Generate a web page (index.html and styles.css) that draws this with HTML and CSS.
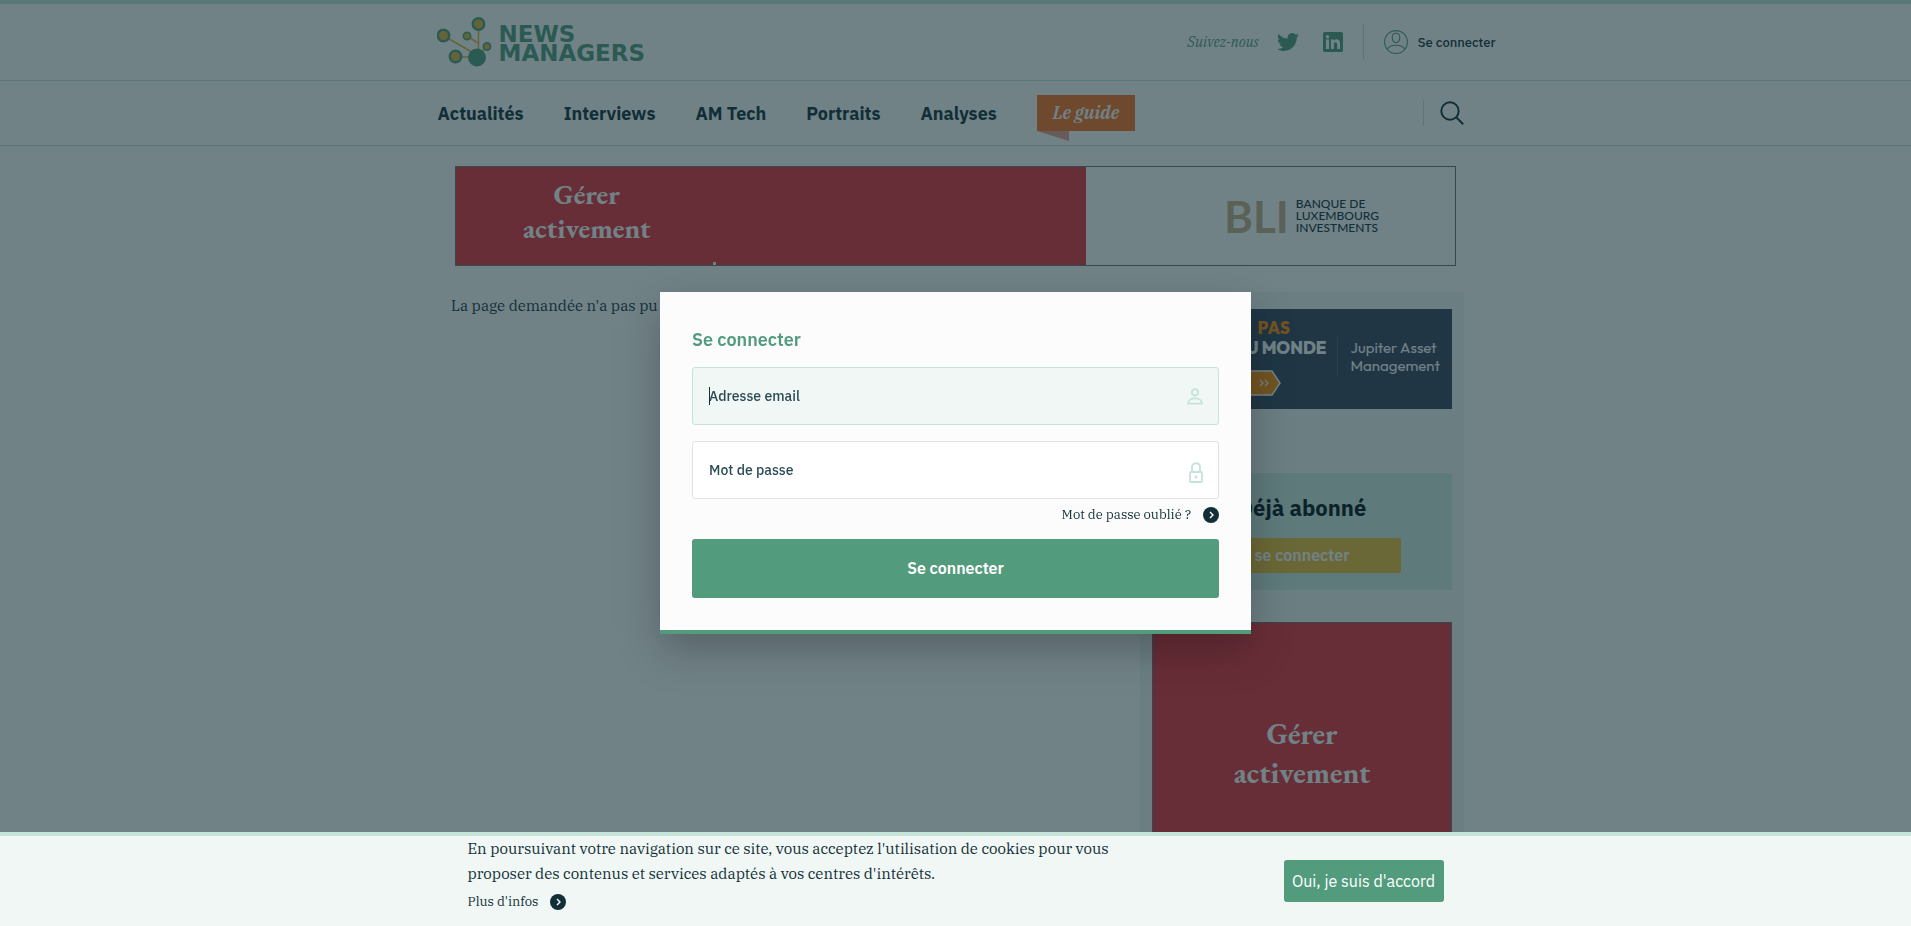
FILE: index.html
```html
<!DOCTYPE html>
<html lang="fr">
<head>
<meta charset="utf-8">
<title>News Managers</title>
<link rel="stylesheet" href="styles.css">
</head>
<body>
<header class="site-header">
  <div class="header-inner">
    <a class="logo" href="#">
      <svg width="56" height="52" viewBox="17 16 56 52" aria-hidden="true">
        <path d="M24 36 57 55M58.500 24V56M47 36l11 7M67 46 57 57M36 57h20" stroke="#e0b53c" stroke-width="1.500" fill="none"/>
        <g fill="#e0b53c" stroke="#529b7d" stroke-width="2.500">
          <circle cx="58.500" cy="24" r="5.700"/><circle cx="23.500" cy="35.500" r="5.700"/><circle cx="47" cy="36" r="3.600" stroke-width="1.700"/><circle cx="67" cy="46.500" r="3.600" stroke-width="1.700"/><circle cx="35.500" cy="56.500" r="5.700"/>
        </g>
        <circle cx="57" cy="57.500" r="9" fill="#529b7d"/>
      </svg>
      <span class="logo-text">NEWS<br>MANAGERS</span>
    </a>
    <div class="header-tools">
      <span class="follow">Suivez-nous</span>
      <a class="social" href="#" aria-label="Twitter"><svg width="22" height="22" viewBox="0 0 24 24" fill="#529b7d"><path d="M23.950 4.570a10 10 0 0 1-2.820.77 4.960 4.960 0 0 0 2.160-2.720c-.95.550-2 .950-3.130 1.180a4.920 4.920 0 0 0-8.380 4.480C7.690 8.090 4.070 6.130 1.640 3.160a4.820 4.820 0 0 0-.67 2.480c0 1.710.870 3.210 2.190 4.100a4.900 4.900 0 0 1-2.230-.62v.06a4.920 4.920 0 0 0 3.950 4.830 5 5 0 0 1-2.210.08 4.940 4.940 0 0 0 4.600 3.420A9.870 9.870 0 0 1 0 19.540a14 14 0 0 0 7.550 2.210c9.050 0 14-7.500 14-13.980 0-.21 0-.42-.02-.63a9.940 9.940 0 0 0 2.460-2.550z"/></svg></a>
      <a class="social" href="#" aria-label="LinkedIn"><svg width="20" height="20" viewBox="0 0 20 20"><path fill="#529b7d" fill-rule="evenodd" d="M1.500 0h17A1.500 1.500 0 0 1 20 1.500v17a1.500 1.500 0 0 1-1.500 1.500h-17A1.500 1.500 0 0 1 0 18.500v-17A1.500 1.500 0 0 1 1.500 0zM3 7.500V17h3V7.500zM4.500 3a1.700 1.700 0 1 0 0 3.400 1.700 1.700 0 0 0 0-3.400zM8 7.500V17h2.900v-4.700c0-2.900 3.300-2.900 3.300 0V17H17v-5.700c0-4.700-4.600-4.900-6.100-2.400V7.500z"/></svg></a>
      <a class="account" href="#"><svg width="24" height="24" viewBox="0 0 24 24" fill="none" stroke="#529b7d" stroke-width="1.100"><circle cx="12" cy="12" r="11.400"/><path d="M12 3.200c2.500 0 3.800 1.600 3.800 4.200S14.200 12.800 12 12.800 8.200 10 8.200 7.400 9.500 3.200 12 3.200zM3.200 19.200c1.500-2.600 5-3.900 8.800-3.900s7.300 1.300 8.800 3.900"/></svg>Se connecter</a>
    </div>
  </div>
</header>
<nav class="site-nav">
  <div class="nav-inner">
    <a href="#">Actualités</a><a href="#">Interviews</a><a href="#">AM Tech</a><a href="#">Portraits</a><a href="#">Analyses</a>
    <a class="guide" href="#">Le guide</a>
    <button class="search" type="button" aria-label="Rechercher"><svg width="24" height="24" viewBox="0 0 24 24" fill="none" stroke="#122f37" stroke-width="2"><circle cx="10" cy="10" r="8.700"/><path d="m16.200 16.200 7 7"/></svg></button>
  </div>
</nav>
<a class="banner" href="#">
  <span class="banner-red"><span class="slogan">Gérer<br>activement</span><span class="speck"></span></span>
  <span class="bli"><span class="bli-mark">BLI</span><span class="bli-name">BANQUE DE<br>LUXEMBOURG<br>INVESTMENTS</span></span>
</a>
<main class="content">
  <p class="message">La page demandée n'a pas pu</p>
  <aside class="sidebar">
    <a class="jupiter" href="#">
      <span class="jupiter-claim"><span class="pas">PAS</span><span class="monde">DU MONDE</span>
        <svg width="60" height="26" viewBox="0 0 60 26"><path d="M0 1h51l8 12-8 12H0z" fill="#ff8c05" stroke="#fff" stroke-width="1.500"/><path d="m39 10 3 3-3 3m5-6 3 3-3 3" fill="none" stroke="#fff" stroke-width="1.200"/></svg>
      </span>
      <span class="jupiter-name">Jupiter Asset<br>Management</span>
    </a>
    <section class="subscriber"><h2>Déjà abonné</h2><a href="#">se connecter</a></section>
    <a class="square-ad" href="#">Gérer<br>activement</a>
  </aside>
</main>

<div class="overlay">
  <form class="login" role="dialog" aria-labelledby="login-title">
    <h2 id="login-title">Se connecter</h2>
    <div class="field field-active">
      <input type="email" aria-label="Adresse email" placeholder="Adresse email">
      <span class="caret"></span>
      <svg class="field-icon" width="16" height="17" viewBox="0 0 16 17" fill="none" stroke="#c5e3d8" stroke-width="1.800"><circle cx="8" cy="4.300" r="3.200"/><path d="M1 15.700c0-7 14-7 14 0z"/></svg>
    </div>
    <div class="field">
      <input type="password" aria-label="Mot de passe" placeholder="Mot de passe">
      <svg class="field-icon" width="14" height="21" viewBox="0 0 14 21" fill="none" stroke="#c5e3d8" stroke-width="1.800"><rect x="1" y="10" width="12" height="10" rx="1"/><path d="M3 10V5c0-5 8-5 8 0v5"/><circle cx="7" cy="15" r=".7"/></svg>
    </div>
    <a class="more forgot" href="#">Mot de passe oublié ?<svg width="16" height="16" viewBox="0 0 16 16"><circle cx="8" cy="8" r="8" fill="#122f37"/><path d="m7 5 3 3-3 3" fill="none" stroke="#fff" stroke-width="1.400"/></svg></a>
    <button class="submit" type="submit">Se connecter</button>
  </form>
</div>

<div class="cookies">
  <div class="cookies-inner">
    <div class="cookies-text">
      <p>En poursuivant votre navigation sur ce site, vous acceptez l'utilisation de cookies pour vous<br>proposer des contenus et services adaptés à vos centres d'intérêts.</p>
      <a class="more" href="#">Plus d'infos<svg width="16" height="16" viewBox="0 0 16 16"><circle cx="8" cy="8" r="8" fill="#122f37"/><path d="m7 5 3 3-3 3" fill="none" stroke="#fff" stroke-width="1.400"/></svg></a>
    </div>
    <button class="accept" type="button">Oui, je suis d'accord</button>
  </div>
</div>
</body>
</html>
```

FILE: styles.css
```css
:root {
  --ink: #122f37;
  --green: #529b7d;
  --mint: #c5e3d8;
  --pale: #f0f7f5;
  --sans: "IBM Plex Sans", Roboto, "Noto Sans", sans-serif;
  --serif: "IBM Plex Serif", "DejaVu Serif Condensed", "DejaVu Serif", serif;
  --garamond: "EB Garamond", "Liberation Serif", serif;
  --geometric: Outfit, Lato, sans-serif;
}
* { box-sizing: border-box; }
body {
  margin: 0;
  height: 100vh;
  overflow: hidden;
  background: #fff;
  color: var(--ink);
  font-family: var(--sans);
}
a { color: inherit; text-decoration: none; }
button { border: 0; font-family: inherit; cursor: pointer; }
h2, p { margin: 0; }
svg { display: block; flex: none; }

.site-header { border-top: 4px solid var(--mint); border-bottom: 1px solid var(--mint); }
.header-inner, .nav-inner {
  display: flex;
  align-items: center;
  max-width: 1080px;
  margin: 0 auto;
}
.header-inner { height: 76px; padding-left: 21px; justify-content: space-between; }
.logo { display: flex; align-items: center; gap: 6px; }
.logo-text {
  padding-top: 3px;
  color: var(--green);
  font: bold 23px/19px "DejaVu Sans", sans-serif;
}
.header-tools { display: flex; align-items: center; }
.follow { color: var(--green); font: italic 14px/20px var(--serif); margin-right: 18px; }
.social { margin-right: 24px; }
.social + .social { margin-right: 20px; }
.account {
  display: flex;
  align-items: center;
  gap: 10px;
  height: 36px;
  padding-left: 20px;
  border-left: 1px solid var(--mint);
  font-size: 13px;
  font-weight: 500;
}

.site-nav { border-bottom: 1px solid var(--mint); }
.nav-inner { height: 64px; gap: 40px; padding: 0 32px 0 22px; font-size: 18px; font-weight: 700; }
.guide {
  position: relative;
  padding: 0 16px;
  background: #f87020;
  color: #fff;
  font: italic 600 18px/36px var(--serif);
}
.guide::after {
  content: "";
  position: absolute;
  top: 100%;
  left: 0;
  border-top: 10px solid #e8a090;
  border-left: 32px solid transparent;
}
.search {
  margin-left: auto;
  padding: 1px 0 1px 16px;
  border-left: 1px solid #ddd;
  background: none;
}

.banner {
  display: flex;
  max-width: 1001px;
  height: 100px;
  margin: 20px auto 26px;
  border: 1px solid #6c7073;
  overflow: hidden;
}
.banner-red {
  display: flex;
  justify-content: space-between;
  align-items: flex-end;
  width: 630px;
  padding-left: 67px;
  background: #e92d39;
  color: #fff;
}
.slogan { padding-bottom: 20px; text-align: center; font: bold 28px/34px var(--garamond); }
.speck { width: 3px; height: 3px; margin-right: 370px; background: #fff; }
.bli { display: flex; align-items: center; gap: 7px; margin-left: auto; padding-right: 76px; }
.bli-mark { color: #c6ac84; font: bold 44px/44px Lato, sans-serif; }
.bli-name { font: 500 12px/12px Lato, sans-serif; }

.content {
  display: flex;
  justify-content: space-between;
  max-width: 1017px;
  margin: 0 auto;
}
.message { padding: 4px; font: 15px/20px var(--serif); }
.sidebar { width: 324px; padding: 17px 12px; background: var(--pale); }
.jupiter {
  display: flex;
  align-items: center;
  justify-content: flex-end;
  height: 100px;
  margin-bottom: 64px;
  padding: 0 12px 4px 0;
  background: #35435a;
  color: #fff;
}
.jupiter-claim { display: grid; margin-right: 11px; font: 800 17px/20px var(--geometric); }
.jupiter-claim .pas { color: #ff8c05; margin-left: 24px; }
.jupiter-claim svg { margin-top: 12px; margin-left: -13px; }
.jupiter-name { padding: 2px 0 2px 12px; border-left: 1px solid #4d5c72; font: 15px/18px var(--geometric); }
.subscriber { padding: 17px 0; margin-bottom: 32px; background: #d1eae2; text-align: center; }
.subscriber h2 { margin-bottom: 12px; font-size: 22px; line-height: 36px; color: #001014; }
.subscriber a {
  display: block;
  width: 198px;
  margin: 0 auto;
  border-radius: 2px;
  background: #f0be37;
  color: #fff;
  font-size: 16px;
  font-weight: 600;
  line-height: 35px;
}
.square-ad {
  display: block;
  height: 300px;
  padding-top: 91px;
  border: 1px solid #6c7073;
  background: #e92d39;
  color: #fff;
  text-align: center;
  font: bold 30px/39px var(--garamond);
}

.overlay {
  position: fixed;
  inset: 0;
  display: flex;
  align-items: center;
  justify-content: center;
  background: rgba(18, 47, 55, 0.6);
}
.login {
  display: flex;
  flex-direction: column;
  width: 591px;
  padding: 32px;
  border-bottom: 4px solid var(--green);
  background: #fcfcfc;
  box-shadow: 0 16px 40px rgba(0, 0, 0, 0.25);
}
.login h2 { margin-bottom: 11px; color: var(--green); font-size: 18px; font-weight: 600; line-height: 32px; }
.field { position: relative; margin-bottom: 16px; }
.field input {
  display: block;
  width: 100%;
  height: 58px;
  padding: 0 16px;
  border: 1px solid #e0e2e3;
  border-radius: 3px;
  background: #fff;
  color: var(--ink);
  font: 500 14px/20px var(--sans);
}
.field input::placeholder { color: #2d4b55; opacity: 1; }
.field-active input { border-color: var(--mint); background: var(--pale); }
.caret { position: absolute; left: 17px; top: 20px; width: 1px; height: 18px; background: var(--ink); }
.field-icon { position: absolute; right: 16px; top: 21px; }
.more { display: flex; align-items: center; gap: 12px; font: 13px/16px var(--serif); }
.forgot { align-self: flex-end; margin: -8px 0 16px; }
.submit {
  height: 59px;
  padding-bottom: 3px;
  border-radius: 3px;
  background: var(--green);
  color: #fff;
  font-size: 16px;
  font-weight: 600;
}

.cookies {
  position: fixed;
  inset: auto 0 0;
  border-top: 4px solid var(--mint);
  background: var(--pale);
}
.cookies-inner {
  display: flex;
  align-items: center;
  justify-content: space-between;
  max-width: 976px;
  height: 90px;
  margin: 0 auto;
}
.cookies-text { align-self: flex-start; }
.cookies-text p { margin-bottom: 8px; font: 15px/25px var(--serif); }
.accept {
  width: 160px;
  height: 42px;
  padding: 0;
  border-radius: 3px;
  background: var(--green);
  color: #fff;
  font-size: 16px;
}
```
